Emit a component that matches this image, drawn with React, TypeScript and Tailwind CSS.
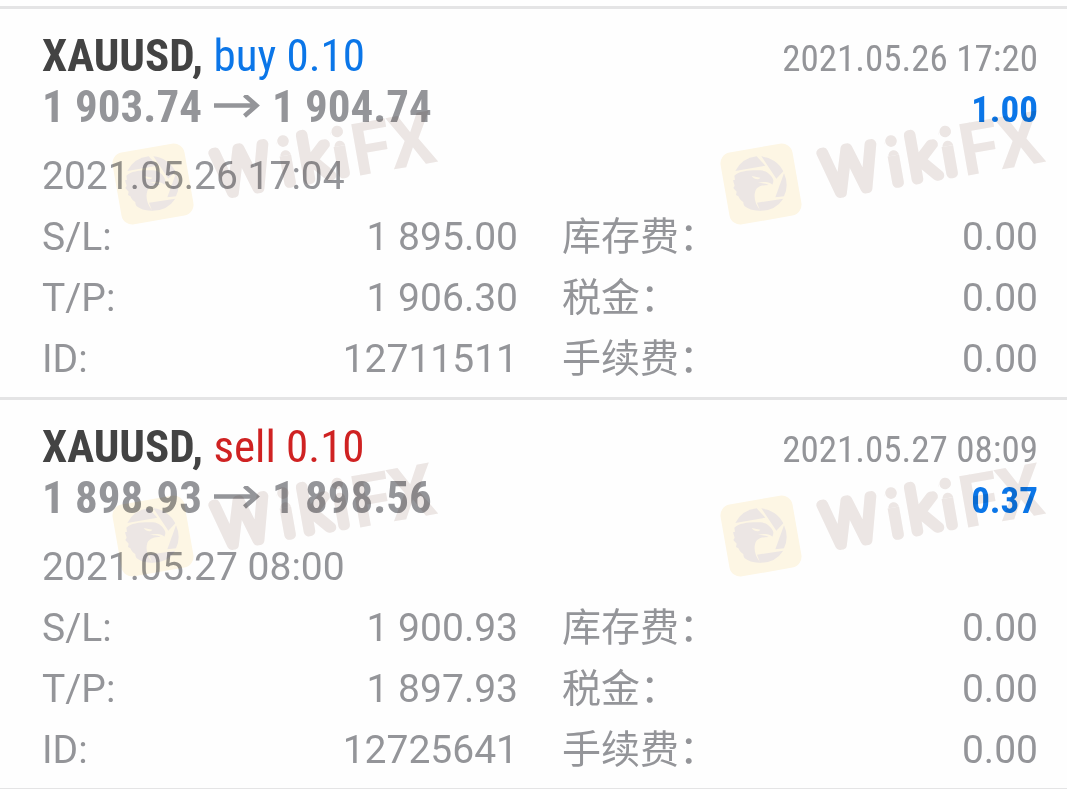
type Side = "buy" | "sell";

interface Deal {
  symbol: string;
  side: Side;
  volume: string;
  open: string;
  close: string;
  opened: string;
  closed: string;
  profit: string;
  stopLoss: string;
  takeProfit: string;
  id: string;
  swap: string;
  tax: string;
  fee: string;
}

const deals: Deal[] = [
  {
    symbol: "XAUUSD",
    side: "buy",
    volume: "0.10",
    open: "1 903.74",
    close: "1 904.74",
    opened: "2021.05.26 17:04",
    closed: "2021.05.26 17:20",
    profit: "1.00",
    stopLoss: "1 895.00",
    takeProfit: "1 906.30",
    id: "12711511",
    swap: "0.00",
    tax: "0.00",
    fee: "0.00",
  },
  {
    symbol: "XAUUSD",
    side: "sell",
    volume: "0.10",
    open: "1 898.93",
    close: "1 898.56",
    opened: "2021.05.27 08:00",
    closed: "2021.05.27 08:09",
    profit: "0.37",
    stopLoss: "1 900.93",
    takeProfit: "1 897.93",
    id: "12725641",
    swap: "0.00",
    tax: "0.00",
    fee: "0.00",
  },
];

const sideColor: Record<Side, string> = {
  buy: "text-[#0b76e8]",
  sell: "text-[#cf2222]",
};

function Arrow() {
  return (
    <svg className="mx-3 h-6 w-[46px] shrink-0" viewBox="0 0 46 24" fill="none" stroke="currentColor" strokeWidth="4.5" aria-label="to">
      <path d="M0 10.5H43M30.5 0L42.5 10.5L30.5 21" />
    </svg>
  );
}

function Field({ label, value }: { label: string; value: string }) {
  return (
    <div className="flex justify-between">
      <dt>{label}</dt>
      <dd>{value}</dd>
    </div>
  );
}

function DealRow({ deal }: { deal: Deal }) {
  return (
    <article className="border-b-[3px] border-[#e4e4e5] pt-[21px] pr-[29px] pb-[7px] pl-[42px]">
      <header className="flex justify-between font-['Roboto_Condensed','Roboto',sans-serif]">
        <div className="text-[45px] leading-[51px] whitespace-nowrap">
          <h2>
            <span className="font-bold text-[#434343]">{deal.symbol},</span>{" "}
            <span className={sideColor[deal.side]}>
              {deal.side} {deal.volume}
            </span>
          </h2>
          <p className="flex items-center font-bold">
            {deal.open}
            <Arrow />
            {deal.close}
          </p>
        </div>
        <div className="pt-[3px] text-right text-[37px] leading-[51px] whitespace-nowrap">
          <time className="block">{deal.closed}</time>
          <p className="font-bold text-[#0b76e8]">{deal.profit}</p>
        </div>
      </header>
      <time className="mt-[11px] block text-[39px] leading-[61px]">{deal.opened}</time>
      <div className="grid grid-cols-2 gap-x-11 text-[39px] leading-[61px]">
        <dl>
          <Field label="S/L:" value={deal.stopLoss} />
          <Field label="T/P:" value={deal.takeProfit} />
          <Field label="ID:" value={deal.id} />
        </dl>
        <dl>
          <Field label="库存费：" value={deal.swap} />
          <Field label="税金：" value={deal.tax} />
          <Field label="手续费：" value={deal.fee} />
        </dl>
      </div>
    </article>
  );
}

function Watermark() {
  return (
    <svg className="h-[140px] w-[350px] overflow-visible" viewBox="0 0 350 140">
      <defs>
        <mask id="stem-gap" maskUnits="userSpaceOnUse" x="40" y="-60" width="280" height="120">
          <rect x="40" y="-60" width="280" height="120" fill="white" />
          <rect x="128.5" y="-34" width="14" height="29" fill="black" />
          <rect x="183.5" y="-34" width="14" height="29" fill="black" />
        </mask>
      </defs>
      <g transform="translate(50 84)">
        <rect x="-36.5" y="-36.5" width="73" height="73" rx="11" fill="#fef7e5" transform="rotate(-10)" />
        <g transform="scale(.3333) translate(-137 -133)" fill="#ede7e5">
          <path d="M60 94A82 82 0 0 1 124 50L150 78Z" />
          <path d="M138 50A82 82 0 0 1 204 95L183 117Z" />
          <path d="M206 101A82 82 0 0 1 206 170L180 173Z" />
          <path d="M125 189L204 177A82 82 0 0 1 134 213Z" />
          <path d="M57 108C72 94 100 91 137 92C154 93 168 106 173 118C175 124 174 130 171 135C165 129 157 126 146 127C139 127 133 129 128 128C136 132 150 130 160 136C142 136 126 139 120 154C114 172 120 196 136 213C114 214 100 209 88 200C85 196 84 192 84 187C78 184 72 178 69 170L62 166L64 156L54 145L58 138L53 122L59 120Z" />
          <path d="M109 109L135 114C131 121 117 120 109 109Z" fill="#fef7e5" />
        </g>
        <g transform="rotate(-10)" fill="#ede7e5" stroke="#ede7e5" strokeLinejoin="round">
          <text x="63 129 149 184" y="22.5" fontSize="60" fontWeight="100" strokeWidth="10" mask="url(#stem-gap)">
            Wiki
          </text>
          <g stroke="none">
            <circle cx="135.5" cy="-19.7" r="5.8" />
            <circle cx="190.5" cy="-19.7" r="5.8" />
            <path d="M130.3 -5A5.3 5.3 0 0 1 140.9 -5ZM185.3 -5A5.3 5.3 0 0 1 195.9 -5Z" />
          </g>
          <text x="201 239" y="27.5" fontSize="73" fontWeight="700" stroke="none">
            FX
          </text>
        </g>
      </g>
    </svg>
  );
}

export default function App() {
  return (
    <main className="relative overflow-hidden bg-[#fefefe] pt-1.5 font-['Roboto','Noto_Sans_CJK_SC',sans-serif] text-[#949599]">
      <div className="border-t-[3px] border-[#e4e4e5]">
        {deals.map((deal) => (
          <DealRow key={deal.id} deal={deal} />
        ))}
      </div>
      <div aria-hidden="true" className="pointer-events-none absolute top-[100px] left-[103px] grid grid-cols-[608px_350px] gap-y-[212px] mix-blend-multiply">
        <Watermark />
        <Watermark />
        <Watermark />
        <Watermark />
      </div>
    </main>
  );
}
